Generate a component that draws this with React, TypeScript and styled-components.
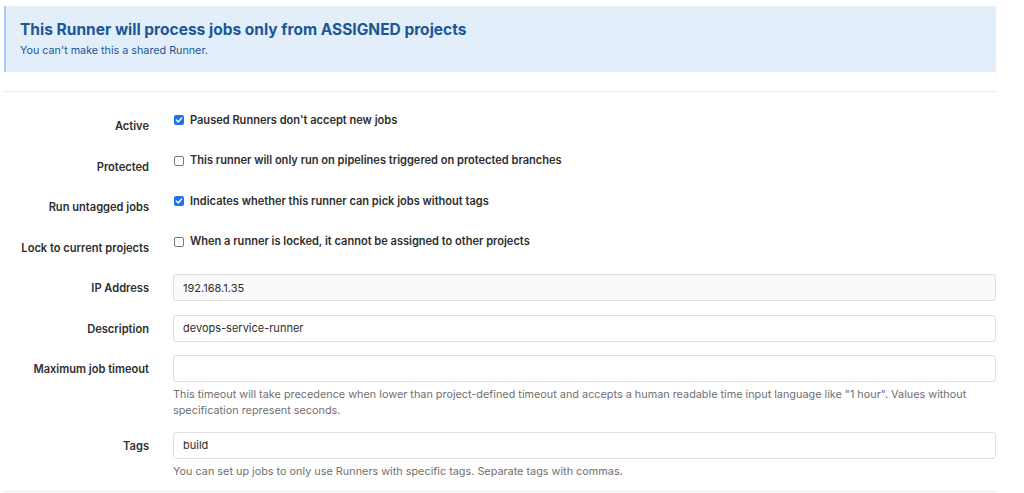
import React from "react";
import styled, { createGlobalStyle } from "styled-components";

const GlobalStyle = createGlobalStyle`
  html, body {
    margin: 0;
    padding: 0;
    background: #ffffff;
  }
  body {
    font-family: Inter, "Noto Sans", "Liberation Sans", sans-serif;
    color: #2e2e2e;
    -webkit-font-smoothing: antialiased;
  }
  * { box-sizing: border-box; }
`;

const Page = styled.div`
  width: 1024px;
  padding: 6px 28px 0 4px;
`;

const Banner = styled.div`
  background: #e2eefa;
  border-left: 2px solid #a9cbf0;
  height: 66px;
  padding: 14px 14px 0 14px;
`;

const BannerTitle = styled.h4`
  margin: 0;
  font-size: 15.5px;
  line-height: 19px;
  font-weight: 700;
  color: #1b5796;
`;

const BannerText = styled.p`
  margin: 5px 0 0;
  font-size: 10.75px;
  line-height: 13px;
  color: #1b5796;
`;

const Divider = styled.hr<{ $top: number; $bottom: number }>`
  border: 0;
  border-top: 1px solid #ebebeb;
  margin: ${(p) => `${p.$top}px 0 ${p.$bottom}px`};
  height: 0;
`;

const Form = styled.div`
  display: flex;
  flex-direction: column;
  gap: 13.5px;
`;

const Row = styled.div`
  display: grid;
  grid-template-columns: 145px 1fr;
  column-gap: 24px;
  align-items: start;
`;

const Label = styled.label`
  text-align: right;
  font-size: 11.1px;
  font-weight: 600;
  line-height: 13px;
  color: #2e2e2e;
  padding-top: 8px;
  white-space: nowrap;
`;

const Field = styled.div`
  display: flex;
  flex-direction: column;
`;

const CheckLine = styled.label`
  display: flex;
  align-items: center;
  gap: 6px;
  height: 27px;
  padding-top: 1px;
  padding-bottom: 12px;
  font-size: 11.05px;
  font-weight: 600;
  line-height: 13px;
  color: #2e2e2e;
  padding-left: 1px;
`;

const Box = styled.span<{ $on: boolean }>`
  width: 10px;
  height: 10px;
  border-radius: 2px;
  flex: none;
  display: inline-flex;
  align-items: center;
  justify-content: center;
  background: ${(p) => (p.$on ? "#1a73e8" : "#ffffff")};
  border: ${(p) => (p.$on ? "none" : "1px solid #7a7a7a")};
`;

const Input = styled.div<{ $readonly?: boolean }>`
  height: 27px;
  border: 1px solid #e0e0e0;
  border-radius: 3px;
  background: ${(p) => (p.$readonly ? "#fafafa" : "#ffffff")};
  padding: 0 9px;
  display: flex;
  align-items: center;
  font-size: 11px;
  color: #2e2e2e;
`;

const Help = styled.p`
  margin: 4px 0 0;
  font-size: 10.85px;
  line-height: 16px;
  color: #707070;
`;

const Check = ({ on }: { on: boolean }) => (
  <Box $on={on}>
    {on && (
      <svg width="8" height="8" viewBox="0 0 8 8">
        <path d="M1.3 4.1 L3.2 6 L6.7 2" stroke="#fff" strokeWidth="1.4" fill="none" strokeLinecap="round" strokeLinejoin="round" />
      </svg>
    )}
  </Box>
);

const checks = [
  { label: "Active", text: "Paused Runners don't accept new jobs", on: true },
  { label: "Protected", text: "This runner will only run on pipelines triggered on protected branches", on: false },
  { label: "Run untagged jobs", text: "Indicates whether this runner can pick jobs without tags", on: true },
  { label: "Lock to current projects", text: "When a runner is locked, it cannot be assigned to other projects", on: false },
];

export default function App() {
  return (
    <>
      <GlobalStyle />
      <Page>
        <Banner>
          <BannerTitle>This Runner will process jobs only from ASSIGNED projects</BannerTitle>
          <BannerText>You can't make this a shared Runner.</BannerText>
        </Banner>
        <Divider $top={19} $bottom={20} />
        <Form>
          {checks.map((c) => (
            <Row key={c.label}>
              <Label>{c.label}</Label>
              <CheckLine>
                <Check on={c.on} />
                {c.text}
              </CheckLine>
            </Row>
          ))}
          <Row>
            <Label>IP Address</Label>
            <Input $readonly>192.168.1.35</Input>
          </Row>
          <Row>
            <Label>Description</Label>
            <Input>devops-service-runner</Input>
          </Row>
          <Row>
            <Label>Maximum job timeout</Label>
            <Field>
              <Input />
              <Help>
                This timeout will take precedence when lower than project-defined timeout and accepts a human readable time input language like "1 hour". Values without specification represent seconds.
              </Help>
            </Field>
          </Row>
          <Row>
            <Label>Tags</Label>
            <Field>
              <Input>build</Input>
              <Help>You can set up jobs to only use Runners with specific tags. Separate tags with commas.</Help>
            </Field>
          </Row>
        </Form>
        <Divider $top={12} $bottom={0} />
      </Page>
    </>
  );
}
